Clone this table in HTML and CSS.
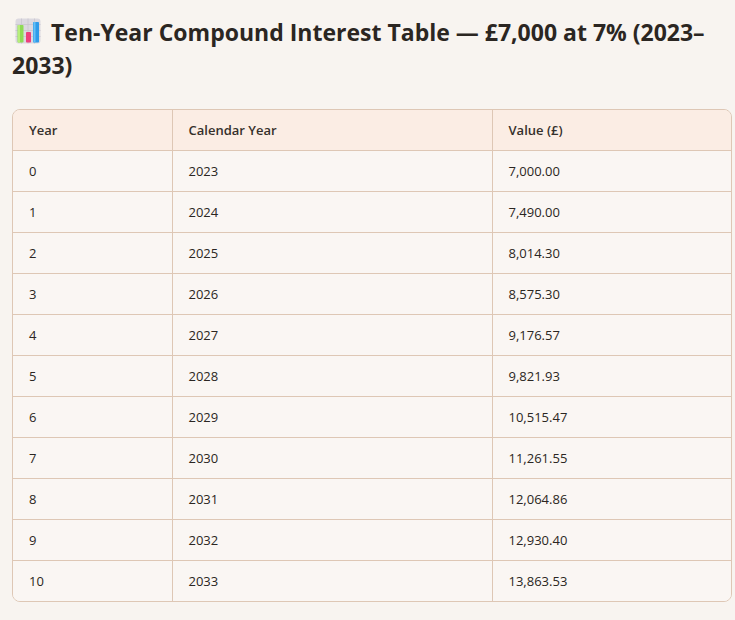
FILE: index.html
```html
<!DOCTYPE html>
<html lang="en">
<head>
<meta charset="utf-8">
<title>Ten-Year Compound Interest Table</title>
<link rel="stylesheet" href="styles.css">
</head>
<body>
<main class="page">
  <h1 class="title"><svg class="emoji" viewBox="0 0 26 26" width="26" height="26" aria-hidden="true">
      <rect x="0.5" y="0.5" width="25" height="25" rx="3" fill="#dcd9e0"/>
      <path d="M0.5 6.5H25.5M0.5 12.5H25.5M0.5 18.5H25.5M6.5 0.5V25.5M13 0.5V25.5M19.5 0.5V25.5" stroke="#c9c5cf" stroke-width="0.8"/>
      <rect x="2.5" y="7" width="6" height="17.5" rx="0.8" fill="#8edb55"/>
      <rect x="3" y="7" width="2" height="17.5" fill="#b7ee7a"/>
      <rect x="11" y="14" width="5" height="10.5" rx="0.8" fill="#ee3f7c"/>
      <rect x="18" y="4" width="6" height="20.5" rx="0.8" fill="#2f9bea"/>
      <rect x="18.5" y="4" width="2" height="20.5" fill="#66c0f5"/>
    </svg> Ten-Year Compound Interest Table — £7,000 at 7% (2023–2033)</h1>
  <div class="table-wrap">
    <table class="data">
      <colgroup>
        <col class="c1"><col class="c2"><col class="c3">
      </colgroup>
      <thead>
        <tr><th>Year</th><th>Calendar Year</th><th>Value (£)</th></tr>
      </thead>
      <tbody>
        <tr><td>0</td><td>2023</td><td>7,000.00</td></tr>
        <tr><td>1</td><td>2024</td><td>7,490.00</td></tr>
        <tr><td>2</td><td>2025</td><td>8,014.30</td></tr>
        <tr><td>3</td><td>2026</td><td>8,575.30</td></tr>
        <tr><td>4</td><td>2027</td><td>9,176.57</td></tr>
        <tr><td>5</td><td>2028</td><td>9,821.93</td></tr>
        <tr><td>6</td><td>2029</td><td>10,515.47</td></tr>
        <tr><td>7</td><td>2030</td><td>11,261.55</td></tr>
        <tr><td>8</td><td>2031</td><td>12,064.86</td></tr>
        <tr><td>9</td><td>2032</td><td>12,930.40</td></tr>
        <tr><td>10</td><td>2033</td><td>13,863.53</td></tr>
      </tbody>
    </table>
  </div>
</main>
</body>
</html>
```
FILE: styles.css
```css
html, body {
  margin: 0;
  padding: 0;
  background: #f8f4f0;
}
body {
  font-family: "Open Sans", "Noto Sans", sans-serif;
  color: #2b2622;
}
.page {
  padding: 16px 3px 0 12px;
}
.title {
  margin: 0 0 27px 0;
  font-size: 23px;
  line-height: 33px;
  font-weight: 700;
  color: #2b2622;
  letter-spacing: 0;
}
.emoji {
  display: inline-block;
  vertical-align: -3px;
  margin-left: 3px;
  margin-right: 4px;
}
.table-wrap {
  border: 1px solid #dec7b5;
  border-radius: 8px;
  overflow: hidden;
  width: 718px;
}
.data {
  width: 100%;
  border-collapse: collapse;
  table-layout: fixed;
  font-size: 13px;
}
.c1 { width: 159px; }
.c2 { width: 320px; }
.c3 { width: 239px; }
.data th,
.data td {
  text-align: left;
  padding: 0 16px;
  height: 40px;
  border-bottom: 1px solid #dec7b5;
  border-right: 1px solid #dec7b5;
}
.data th:last-child,
.data td:last-child {
  border-right: none;
}
.data tbody tr:last-child td {
  border-bottom: none;
}
.data th {
  background: #fbede4;
  font-weight: 600;
  font-size: 13px;
  color: #35302b;
}
.data td {
  background: #faf6f3;
}
```
